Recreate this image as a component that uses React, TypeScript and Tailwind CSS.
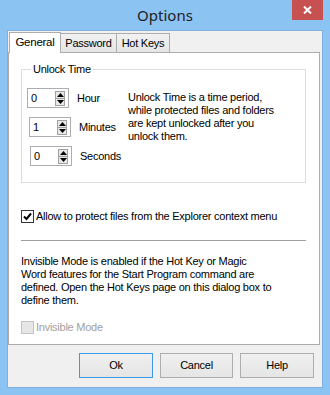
import { useState } from 'react';

// Small up/down spinner glyph used next to each numeric field
function SpinArrows() {
  return (
    <div className="flex flex-col w-[10px] h-[15px] border border-[#a0a0a0] bg-[#e8e8e8]">
      <div className="flex-1 flex items-center justify-center border-b border-[#a0a0a0]">
        <svg width="7" height="4" viewBox="0 0 7 4">
          <path d="M3.5 0 L7 4 L0 4 Z" fill="#000" />
        </svg>
      </div>
      <div className="flex-1 flex items-center justify-center">
        <svg width="7" height="4" viewBox="0 0 7 4">
          <path d="M0 0 L7 0 L3.5 4 Z" fill="#000" />
        </svg>
      </div>
    </div>
  );
}

function Spinner({ value, label, offset }: { value: string; label: string; offset: string }) {
  return (
    <div className="flex items-center h-[20px]">
      <div className={`${offset} flex items-center justify-between w-[42px] h-[20px] border border-[#abadb3] bg-white pl-[3px] pr-[3px]`}>
        <span>{value}</span>
        <SpinArrows />
      </div>
      <span className="ml-[8px]">{label}</span>
    </div>
  );
}

function Checkbox({ checked, disabled }: { checked?: boolean; disabled?: boolean }) {
  return (
    <div
      className={`w-[13px] h-[13px] border flex items-center justify-center ${
        disabled ? 'border-[#c4c4c4] bg-[#e6e6e6]' : 'border-[#333] bg-white'
      }`}
    >
      {checked && (
        <svg width="9" height="9" viewBox="0 0 9 9">
          <path d="M1 4.5 L3.5 7 L8 1.5" fill="none" stroke="#000" strokeWidth="2" />
        </svg>
      )}
    </div>
  );
}

function App() {
  const [tab] = useState('General');
  const tabs = [
    { name: 'General', w: 'w-[52px]' },
    { name: 'Password', w: 'w-[56px]' },
    { name: 'Hot Keys', w: 'w-[53px]' },
  ];

  return (
    <div
      className="w-[330px] h-[395px] bg-[#8bc3f3] flex flex-col text-[11px] tracking-[-0.25px] text-black"
      style={{ fontFamily: '"Liberation Sans", Arial, sans-serif' }}
    >
      {/* Title bar */}
      <div className="relative h-[30px] flex items-center justify-center">
        <span className="text-[15px] tracking-normal text-[#1e1e1e] pt-[1px]" style={{ fontFamily: '"Noto Sans", "Open Sans", sans-serif' }}>
          Options
        </span>
        <div className="absolute top-0 right-[7px] w-[31px] h-[20px] bg-[#c75050] flex items-center justify-center">
          <svg width="9" height="8" viewBox="0 0 9 8">
            <path d="M1 0.5 L8 7.5 M8 0.5 L1 7.5" stroke="#fff" strokeWidth="2" />
          </svg>
        </div>
      </div>

      {/* Client area */}
      <div className="mx-[7px] h-[358px] border border-[#7fb0de] bg-[#f0f0f0] flex flex-col">
        {/* Tab strip */}
        <div className="flex items-end h-[21px] pl-[1px]">
          {tabs.map((t) =>
            t.name === tab ? (
              <div
                key={t.name}
                className={`${t.w} h-[21px] -mb-px z-10 bg-white border border-b-0 border-[#adadad] flex items-center justify-center text-[11.5px]`}
              >
                {t.name}
              </div>
            ) : (
              <div
                key={t.name}
                className={`${t.w} h-[19px] bg-gradient-to-b from-[#f2f2f2] to-[#e5e5e5] border border-b-0 border-l-0 border-[#adadad] flex items-center justify-center`}
              >
                {t.name}
              </div>
            )
          )}
        </div>

        {/* Tab page */}
        <div className="mr-[2px] h-[293px] bg-white border border-[#adadad] flex flex-col pl-[12px] pr-[13px]">
          {/* Unlock Time group */}
          <div className="relative mt-[16px] h-[114px] border border-[#dcdcdc] flex pt-[18px]">
            <span className="absolute -top-[7px] left-[9px] bg-white px-[2px] leading-[13px]">Unlock Time</span>
            <div className="flex flex-col gap-[9px] pl-[5px] w-[106px]">
              <Spinner value="0" label="Hour" offset="ml-0" />
              <Spinner value="1" label="Minutes" offset="ml-[2px]" />
              <Spinner value="0" label="Seconds" offset="ml-[3px]" />
            </div>
            <p className="leading-[13px] pt-[3px] whitespace-nowrap">
              Unlock Time is a time period,
              <br />
              while protected files and folders
              <br />
              are kept unlocked after you
              <br />
              unlock them.
            </p>
          </div>

          {/* Explorer option */}
          <div className="flex items-center gap-[2px] mt-[27px] h-[13px]">
            <Checkbox checked />
            <span>Allow to protect files from the Explorer context menu</span>
          </div>

          <div className="mt-[17px] h-[2px] border-t border-[#a0a0a0] border-b border-b-white" />

          <p className="mt-[13px] leading-[13px] whitespace-nowrap">
            Invisible Mode is enabled if the Hot Key or Magic
            <br />
            Word features for the Start Program command are
            <br />
            defined. Open the Hot Keys page on this dialog box to
            <br />
            define them.
          </p>

          <div className="flex items-center gap-[2px] mt-[14px] h-[13px] text-[#a0a0a0]">
            <Checkbox disabled />
            <span>Invisible Mode</span>
          </div>
        </div>

        {/* Buttons */}
        <div className="flex justify-end gap-[7px] mt-[8px] pr-[8px]">
          <button className="w-[74px] h-[25px] border border-[#3c9ae8] bg-gradient-to-b from-[#f0f0f0] to-[#e5e5e5]">
            Ok
          </button>
          <button className="w-[73px] h-[25px] border border-[#adadad] bg-gradient-to-b from-[#f0f0f0] to-[#e5e5e5]">
            Cancel
          </button>
          <button className="w-[74px] h-[25px] border border-[#adadad] bg-gradient-to-b from-[#f0f0f0] to-[#e5e5e5]">
            Help
          </button>
        </div>
      </div>
    </div>
  );
}

export default App;
